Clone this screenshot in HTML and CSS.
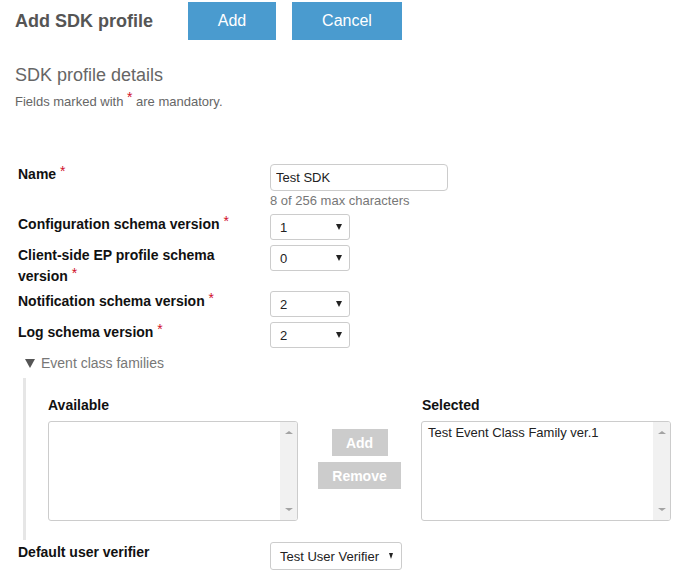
FILE: index.html
```html
<!DOCTYPE html>
<html>
<head>
<meta charset="utf-8">
<title>Add SDK profile</title>
<link rel="stylesheet" href="styles.css">
</head>
<body>
<div class="header">
  <div class="title">Add SDK profile</div>
  <button class="btn btn-add">Add</button>
  <button class="btn btn-cancel">Cancel</button>
</div>
<h2 class="details">SDK profile details</h2>
<div class="note">Fields marked with <span class="req">*</span> are mandatory.</div>

<div class="form form-main">
  <div class="row">
    <div class="lbl">Name <span class="req">*</span></div>
    <div class="ctrl">
      <input class="text" type="text" value="Test SDK">
      <div class="helper">8 of 256 max characters</div>
    </div>
  </div>
  <div class="row">
    <div class="lbl">Configuration schema version <span class="req">*</span></div>
    <div class="ctrl"><div class="select"><span class="val">1</span><span class="caret"></span></div></div>
  </div>
  <div class="row">
    <div class="lbl lbl-2">Client-side EP profile schema version <span class="req">*</span></div>
    <div class="ctrl"><div class="select"><span class="val">0</span><span class="caret"></span></div></div>
  </div>
  <div class="row">
    <div class="lbl">Notification schema version <span class="req">*</span></div>
    <div class="ctrl"><div class="select"><span class="val">2</span><span class="caret"></span></div></div>
  </div>
  <div class="row">
    <div class="lbl">Log schema version <span class="req">*</span></div>
    <div class="ctrl"><div class="select"><span class="val">2</span><span class="caret"></span></div></div>
  </div>
</div>

<div class="ecf-toggle"><span class="tri"></span>Event class families</div>
<div class="ecf">
  <div class="ecf-grid">
    <div class="col-lbl">Available</div>
    <div></div>
    <div class="col-lbl sel-lbl">Selected</div>
    <div class="listbox">
      <div class="lb-content"></div>
      <div class="lb-scroll"><span class="up"></span><span class="down"></span></div>
    </div>
    <div class="mid">
      <button class="gbtn g-add">Add</button>
      <button class="gbtn g-remove">Remove</button>
    </div>
    <div class="listbox">
      <div class="lb-content">Test Event Class Family ver.1</div>
      <div class="lb-scroll"><span class="up"></span><span class="down"></span></div>
    </div>
  </div>
</div>

<div class="form">
  <div class="row row-last">
    <div class="lbl">Default user verifier</div>
    <div class="ctrl"><div class="select select-wide"><span class="val">Test User Verifier</span><span class="caret"></span></div></div>
  </div>
</div>
</body>
</html>
```

FILE: styles.css
```css
* { box-sizing: border-box; }
body {
  margin: 0;
  font-family: "Liberation Sans", Arial, sans-serif;
  background: #fff;
  color: #222;
}
.header {
  display: flex;
  align-items: flex-start;
  padding-left: 15px;
  padding-top: 2px;
  height: 40px;
}
.title {
  width: 173px;
  font-size: 18px;
  font-weight: bold;
  line-height: 38px;
  color: #555;
}
.btn {
  border: 0;
  margin: 0;
  padding: 0;
  height: 38px;
  background: #4a9bcf;
  color: #fff;
  font-family: "Liberation Sans", Arial, sans-serif;
  font-size: 16px;
  line-height: 38px;
  text-align: center;
}
.btn-add { width: 88px; margin-right: 16px; }
.btn-cancel { width: 110px; }

.details {
  margin: 24px 0 0 15px;
  font-size: 18px;
  font-weight: normal;
  line-height: 22px;
  color: #666;
}
.note {
  margin: 8px 0 0 15px;
  font-size: 13px;
  line-height: 16px;
  color: #666;
}
.req {
  color: #d0102a;
  font-size: 14px;
  font-weight: normal;
  vertical-align: 4px;
  line-height: 0;
}
.form { padding-left: 18px; }
.form-main { margin-top: 54px; }
.row {
  display: grid;
  grid-template-columns: 252px auto;
  margin-bottom: 5px;
}
.lbl {
  font-size: 14px;
  font-weight: bold;
  line-height: 21px;
  padding-right: 30px;
  color: #111;
}
.lbl .req { vertical-align: 3px; }
.lbl-2 { margin-bottom: -1px; }
.text {
  display: block;
  width: 178px;
  height: 27px;
  margin: 0;
  border: 1px solid #ccc;
  border-radius: 4px;
  padding: 0 5px;
  font-family: "Liberation Sans", Arial, sans-serif;
  font-size: 13px;
  color: #222;
  outline: none;
}
.helper {
  margin-top: 2px;
  margin-bottom: 1px;
  font-size: 13px;
  line-height: 15px;
  color: #777;
}
.select {
  display: flex;
  align-items: center;
  justify-content: space-between;
  width: 80px;
  height: 26px;
  border: 1px solid #ccc;
  border-radius: 3px;
  padding: 0 7px 0 9px;
  font-size: 13px;
  color: #222;
}
.caret {
  width: 0;
  height: 0;
  border-left: 3px solid transparent;
  border-right: 3px solid transparent;
  border-top: 6px solid #222;
}
.select-wide {
  width: 132px;
  height: 28px;
  padding: 0 8px 0 9px;
}
.select-wide .caret {
  border-left-width: 2.5px;
  border-right-width: 2.5px;
  border-top-width: 6px;
}
.ecf-toggle {
  display: flex;
  align-items: center;
  margin: 3px 0 0 25px;
  font-size: 14px;
  line-height: 20px;
  color: #777;
}
.tri {
  width: 0;
  height: 0;
  border-left: 5px solid transparent;
  border-right: 5px solid transparent;
  border-top: 9px solid #555;
  margin-right: 6px;
}
.ecf {
  margin: 5px 0 0 23px;
  border-left: 3px solid #e6e6e6;
  padding: 17px 0 19px 22px;
}
.ecf-grid {
  display: grid;
  grid-template-columns: 250px 123px 250px;
  row-gap: 6px;
}
.col-lbl {
  font-size: 14px;
  font-weight: bold;
  line-height: 20px;
  color: #111;
}
.sel-lbl { padding-left: 1px; }
.listbox {
  display: flex;
  height: 100px;
  border: 1px solid #ccc;
  border-radius: 3px;
  overflow: hidden;
}
.lb-content {
  flex: 1;
  padding: 3px 6px;
  font-size: 13px;
  line-height: 16px;
  color: #222;
}
.lb-scroll {
  width: 17px;
  background: #f1f1f1;
  display: flex;
  flex-direction: column;
  justify-content: space-between;
  align-items: center;
  padding: 9px 0 9px;
}
.up, .down {
  width: 0;
  height: 0;
  border-left: 4px solid transparent;
  border-right: 4px solid transparent;
}
.up { border-bottom: 3px solid #a3a3a3; }
.down { border-top: 3px solid #a3a3a3; }
.mid {
  display: flex;
  flex-direction: column;
  align-items: center;
  gap: 6px;
  padding-top: 8px;
}
.gbtn {
  border: 0;
  margin: 0;
  padding: 0;
  height: 27px;
  background: #ccc;
  color: #fff;
  font-family: "Liberation Sans", Arial, sans-serif;
  font-size: 14px;
  font-weight: bold;
}
.g-add { width: 56px; }
.g-remove { width: 83px; }
.row-last { margin-top: 2px; }
```
